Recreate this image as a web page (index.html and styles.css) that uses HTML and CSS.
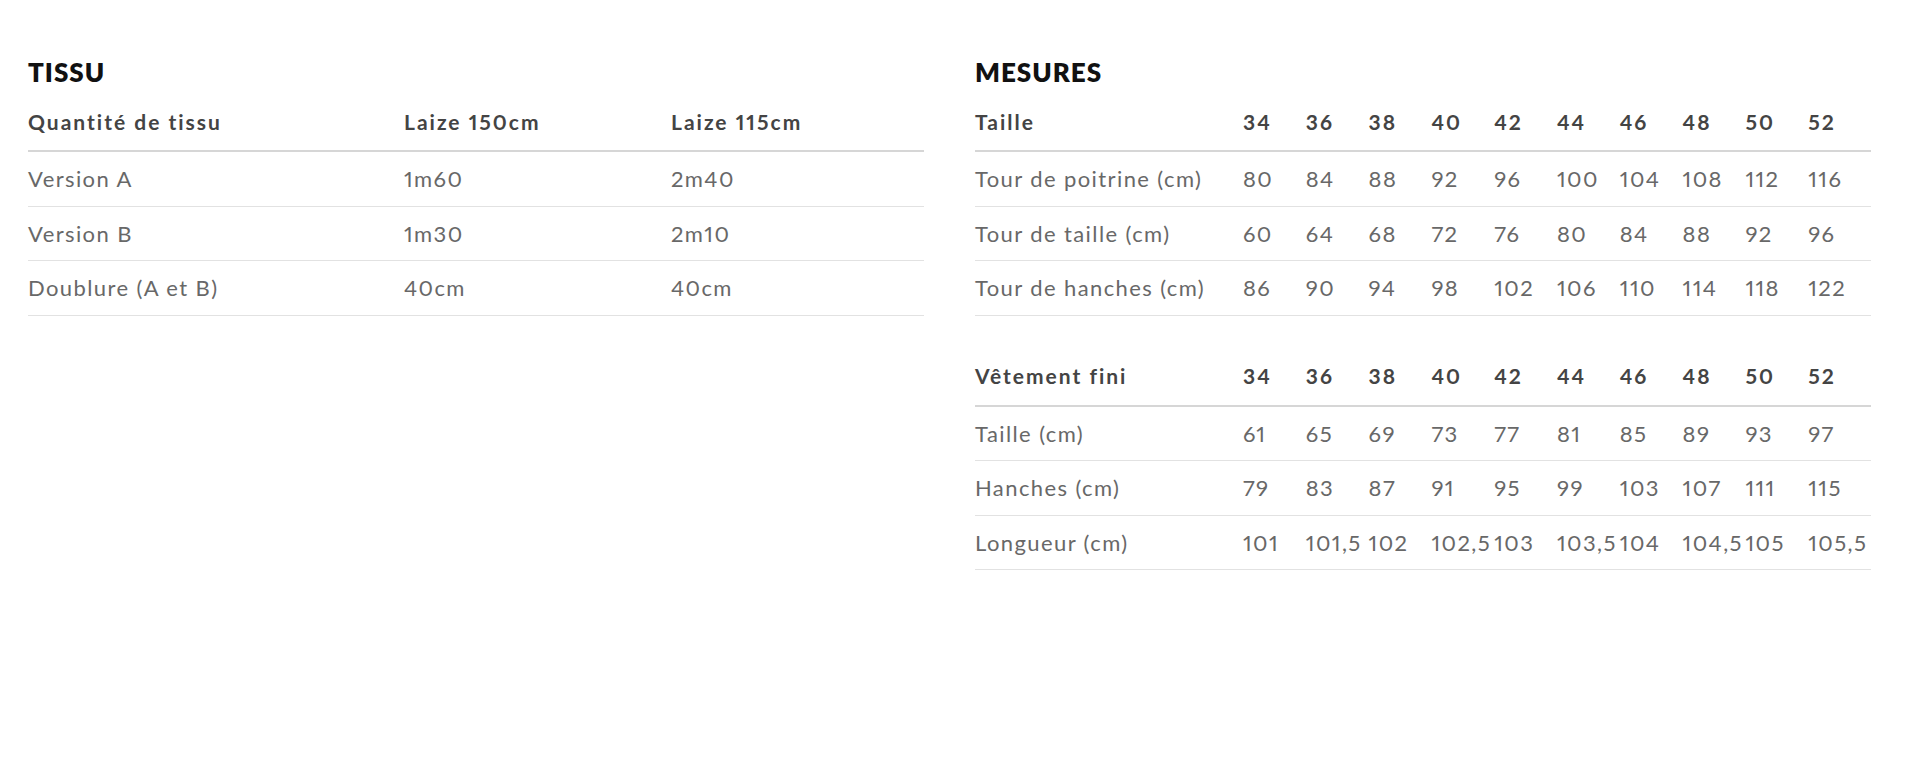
FILE: index.html
```html
<!DOCTYPE html>
<html lang="fr">
<head>
<meta charset="utf-8">
<title>Tissu et mesures</title>
<link rel="stylesheet" href="styles.css">
</head>
<body>
<main class="page">
  <section class="block">
    <h2 class="title">TISSU</h2>
    <div class="table tissu">
      <div class="row head"><span>Quantité de tissu</span><span>Laize 150cm</span><span>Laize 115cm</span></div>
      <div class="row"><span>Version A</span><span>1m60</span><span>2m40</span></div>
      <div class="row"><span>Version B</span><span>1m30</span><span>2m10</span></div>
      <div class="row"><span>Doublure (A et B)</span><span>40cm</span><span>40cm</span></div>
    </div>
  </section>
  <section class="block">
    <h2 class="title">MESURES</h2>
    <div class="table sizes">
      <div class="row head"><span>Taille</span><span>34</span><span>36</span><span>38</span><span>40</span><span>42</span><span>44</span><span>46</span><span>48</span><span>50</span><span>52</span></div>
      <div class="row"><span>Tour de poitrine (cm)</span><span>80</span><span>84</span><span>88</span><span>92</span><span>96</span><span>100</span><span>104</span><span>108</span><span>112</span><span>116</span></div>
      <div class="row"><span>Tour de taille (cm)</span><span>60</span><span>64</span><span>68</span><span>72</span><span>76</span><span>80</span><span>84</span><span>88</span><span>92</span><span>96</span></div>
      <div class="row"><span>Tour de hanches (cm)</span><span>86</span><span>90</span><span>94</span><span>98</span><span>102</span><span>106</span><span>110</span><span>114</span><span>118</span><span>122</span></div>
    </div>
    <div class="table sizes second">
      <div class="row head"><span>Vêtement fini</span><span>34</span><span>36</span><span>38</span><span>40</span><span>42</span><span>44</span><span>46</span><span>48</span><span>50</span><span>52</span></div>
      <div class="row"><span>Taille (cm)</span><span>61</span><span>65</span><span>69</span><span>73</span><span>77</span><span>81</span><span>85</span><span>89</span><span>93</span><span>97</span></div>
      <div class="row"><span>Hanches (cm)</span><span>79</span><span>83</span><span>87</span><span>91</span><span>95</span><span>99</span><span>103</span><span>107</span><span>111</span><span>115</span></div>
      <div class="row"><span>Longueur (cm)</span><span>101</span><span>101,5</span><span>102</span><span>102,5</span><span>103</span><span>103,5</span><span>104</span><span>104,5</span><span>105</span><span>105,5</span></div>
    </div>
  </section>
</main>
</body>
</html>
```

FILE: styles.css
```css
* { box-sizing: border-box; }
html, body { margin: 0; padding: 0; background: #fff; }
body {
  font-family: "Lato", "Liberation Sans", sans-serif;
  color: #686868;
  font-variant-numeric: proportional-nums;
}
.page {
  display: grid;
  grid-template-columns: 896px 896px;
  column-gap: 51px;
  padding: 58px 0 0 28px;
}
.title {
  margin: 0;
  height: 36px;
  line-height: 28px;
  font-size: 26px;
  font-weight: 800;
  letter-spacing: 1px;
  color: #111;
}
.table { display: flex; flex-direction: column; }
.row {
  display: grid;
  align-items: center;
  height: 54.5px;
  border-bottom: 1px solid #e2e2e2;
  font-size: 22px;
  letter-spacing: 1.4px;
  white-space: nowrap;
}
.row.head {
  height: 58px;
  padding-bottom: 2px;
  border-bottom: 2px solid #d6d6d6;
  font-size: 21px;
  font-weight: 700;
  letter-spacing: 2px;
  color: #444;
}
.row span { overflow: visible; }
.tissu .row { grid-template-columns: 376px 267px 253px; }
.sizes .row { grid-template-columns: 268px repeat(10, 1fr); }
.second { margin-top: 33px; }
```
